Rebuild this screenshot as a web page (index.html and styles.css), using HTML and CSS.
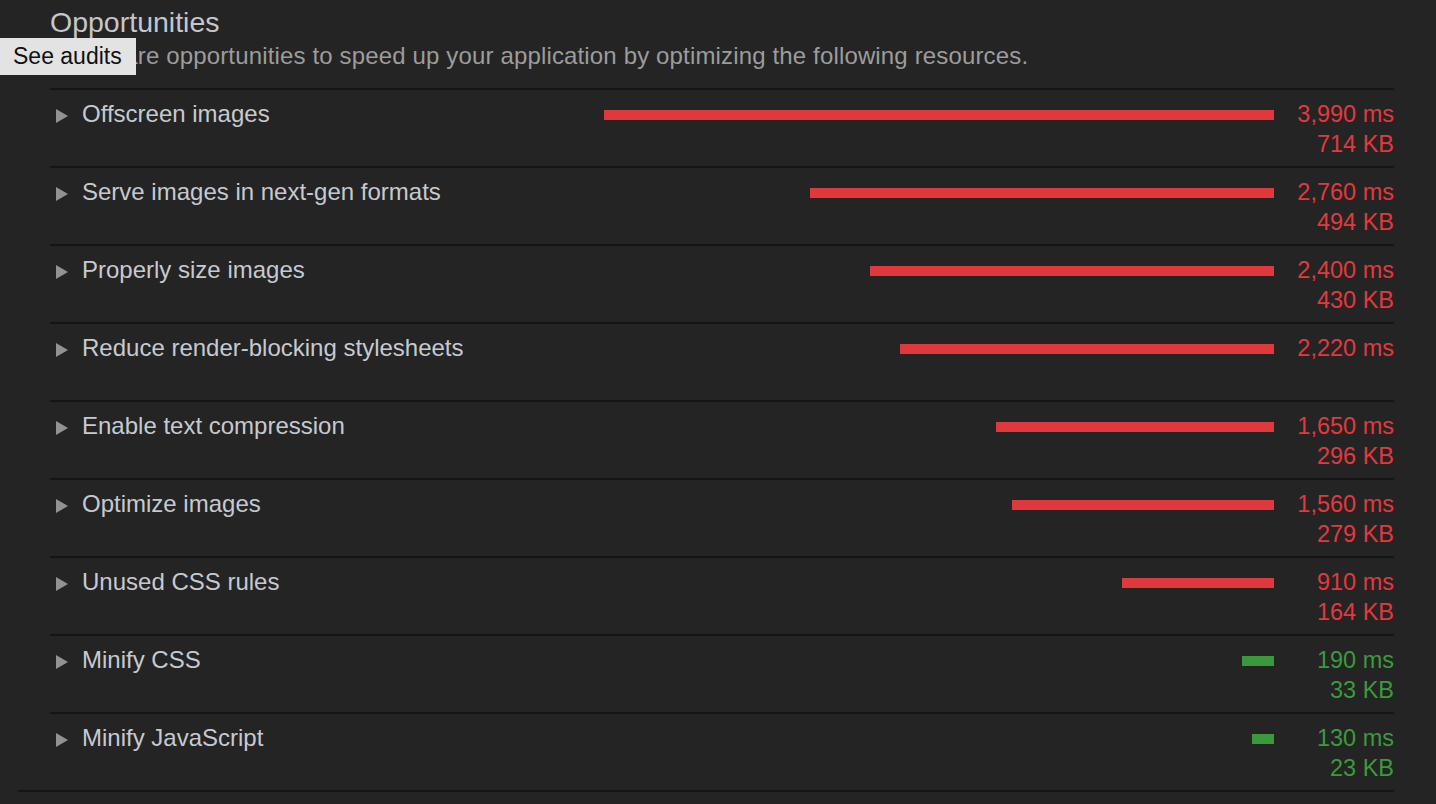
FILE: index.html
```html
<!DOCTYPE html>
<html>
<head>
<meta charset="utf-8">
<link rel="stylesheet" href="styles.css">
</head>
<body>
<div class="page">
  <section class="group">
    <div class="inner">
      <h2 class="title">Opportunities</h2>
      <p class="desc">These are opportunities to speed up your application by optimizing the following resources.</p>
      <div class="list">
        <div class="row">
          <span class="arrow"></span><span class="name">Offscreen images</span>
          <div class="bar-wrap"><div class="bar red" style="width:670px"></div></div>
          <div class="vals red-t"><div>3,990 ms</div><div>714 KB</div></div>
        </div>
        <div class="row">
          <span class="arrow"></span><span class="name">Serve images in next-gen formats</span>
          <div class="bar-wrap"><div class="bar red" style="width:464px"></div></div>
          <div class="vals red-t"><div>2,760 ms</div><div>494 KB</div></div>
        </div>
        <div class="row">
          <span class="arrow"></span><span class="name">Properly size images</span>
          <div class="bar-wrap"><div class="bar red" style="width:404px"></div></div>
          <div class="vals red-t"><div>2,400 ms</div><div>430 KB</div></div>
        </div>
        <div class="row">
          <span class="arrow"></span><span class="name">Reduce render-blocking stylesheets</span>
          <div class="bar-wrap"><div class="bar red" style="width:374px"></div></div>
          <div class="vals red-t"><div>2,220 ms</div></div>
        </div>
        <div class="row">
          <span class="arrow"></span><span class="name">Enable text compression</span>
          <div class="bar-wrap"><div class="bar red" style="width:278px"></div></div>
          <div class="vals red-t"><div>1,650 ms</div><div>296 KB</div></div>
        </div>
        <div class="row">
          <span class="arrow"></span><span class="name">Optimize images</span>
          <div class="bar-wrap"><div class="bar red" style="width:262px"></div></div>
          <div class="vals red-t"><div>1,560 ms</div><div>279 KB</div></div>
        </div>
        <div class="row">
          <span class="arrow"></span><span class="name">Unused CSS rules</span>
          <div class="bar-wrap"><div class="bar red" style="width:152px"></div></div>
          <div class="vals red-t"><div>910 ms</div><div>164 KB</div></div>
        </div>
        <div class="row">
          <span class="arrow"></span><span class="name">Minify CSS</span>
          <div class="bar-wrap"><div class="bar green" style="width:32px"></div></div>
          <div class="vals green-t"><div>190 ms</div><div>33 KB</div></div>
        </div>
        <div class="row">
          <span class="arrow"></span><span class="name">Minify JavaScript</span>
          <div class="bar-wrap"><div class="bar green" style="width:22px"></div></div>
          <div class="vals green-t"><div>130 ms</div><div>23 KB</div></div>
        </div>
      </div>
    </div>
  </section>
  <div class="tooltip">See audits</div>
</div>
</body>
</html>
```
FILE: styles.css
```css
html, body {
  margin: 0;
  padding: 0;
  background: #242424;
  height: 100%;
  overflow: hidden;
}
body {
  font-family: "Liberation Sans", Arial, sans-serif;
}
.page {
  position: relative;
  width: 1436px;
  height: 804px;
}
.group {
  margin-left: 18px;
  width: 1376px;
  border-bottom: 2px solid #151515;
}
.inner {
  padding-left: 32px;
}
.title {
  margin: 0;
  padding-top: 7px;
  font-size: 28.5px;
  font-weight: normal;
  line-height: 30px;
  color: #c3c7cd;
}
.desc {
  margin: 6px 0 19px;
  font-size: 24px;
  letter-spacing: 0.15px;
  line-height: 26px;
  height: 26px;
  color: #9c9c9c;
  white-space: nowrap;
}
.row {
  display: flex;
  align-items: flex-start;
  border-top: 2px solid #151515;
  height: 76px;
}
.arrow {
  flex: none;
  width: 0;
  height: 0;
  margin: 19px 14px 0 6px;
  border-top: 7px solid transparent;
  border-bottom: 7px solid transparent;
  border-left: 12px solid #929292;
}
.name {
  font-size: 24px;
  line-height: 30px;
  padding-top: 9px;
  color: #c6cad0;
  white-space: nowrap;
}
.bar-wrap {
  flex: 1;
  display: flex;
  justify-content: flex-end;
  padding-top: 20px;
}
.bar {
  height: 10px;
}
.bar.red { background: #e0393d; }
.bar.green { background: #3a993a; }
.vals {
  flex: none;
  width: 120px;
  text-align: right;
  font-size: 23.5px;
  line-height: 30px;
  padding-top: 9px;
  white-space: nowrap;
}
.red-t { color: #e2393e; }
.green-t { color: #3b9b3b; }
.tooltip {
  position: absolute;
  left: 0;
  top: 38px;
  width: 136px;
  height: 37px;
  box-sizing: border-box;
  padding-left: 13px;
  background: #e3e3e3;
  color: #111;
  font-size: 23px;
  line-height: 37px;
  white-space: nowrap;
}
```
